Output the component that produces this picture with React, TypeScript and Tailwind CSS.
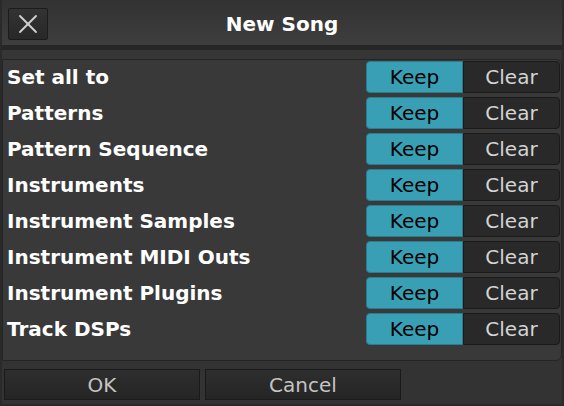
import { X } from 'lucide-react';

const rows = [
  'Set all to',
  'Patterns',
  'Pattern Sequence',
  'Instruments',
  'Instrument Samples',
  'Instrument MIDI Outs',
  'Instrument Plugins',
  'Track DSPs',
];

export default function App() {
  return (
    <div
      className="flex h-[406px] w-[564px] flex-col bg-[#2a2a2a] px-[2px] pb-[2px]"
      style={{ fontFamily: '"DejaVu Sans", sans-serif' }}
    >
      {/* Title bar */}
      <div className="relative flex h-[45px] shrink-0 items-center justify-center bg-gradient-to-b from-[#323232] to-[#3e3e3e]">
        <button className="absolute left-[6px] top-[8px] flex h-[32px] w-[40px] items-center justify-center rounded-[2px] border border-[#1c1c1c] bg-gradient-to-b from-[#333333] to-[#282828] text-[#d0d0d0]">
          <X size={32} strokeWidth={1.4} />
        </button>
        <span className="pt-[2px] text-[20px] font-bold text-white">New Song</span>
      </div>
      <div className="h-[5px] shrink-0 bg-[#262626]" />
      <div className="h-[9px] shrink-0 bg-[#363636]" />

      {/* Body */}
      <div className="flex flex-1 flex-col bg-[#333333]">
        <div className="flex flex-col gap-[4px] rounded-r-[6px] border border-[#252525] bg-[#393939] pt-[1px] pb-[15px] pr-[1px]">
          {rows.map((label) => (
            <div key={label} className="flex h-[32px] items-center justify-between">
              <span className="pl-[4px] text-[20px] font-bold text-white">{label}</span>
              <div className="flex h-[32px]">
                <div className="flex w-[97px] items-center justify-center rounded-l-[4px] border border-[#2a7d8f] bg-[#399fb4] text-[20px] text-black">
                  Keep
                </div>
                <div className="flex w-[97px] items-center justify-center rounded-r-[4px] border border-[#1a1a1a] bg-[#292929] text-[20px] text-[#d4d4d4]">
                  Clear
                </div>
              </div>
            </div>
          ))}
        </div>
        <div className="mt-auto flex gap-[5px] px-[2px] pb-[4px]">
          <button className="h-[31px] w-[196px] border border-[#1a1a1a] bg-gradient-to-b from-[#2e2e2e] to-[#252525] text-[20px] text-[#c4c4c4]">
            OK
          </button>
          <button className="h-[31px] w-[196px] border border-[#1a1a1a] bg-gradient-to-b from-[#2e2e2e] to-[#252525] text-[20px] text-[#c4c4c4]">
            Cancel
          </button>
        </div>
      </div>
    </div>
  );
}
